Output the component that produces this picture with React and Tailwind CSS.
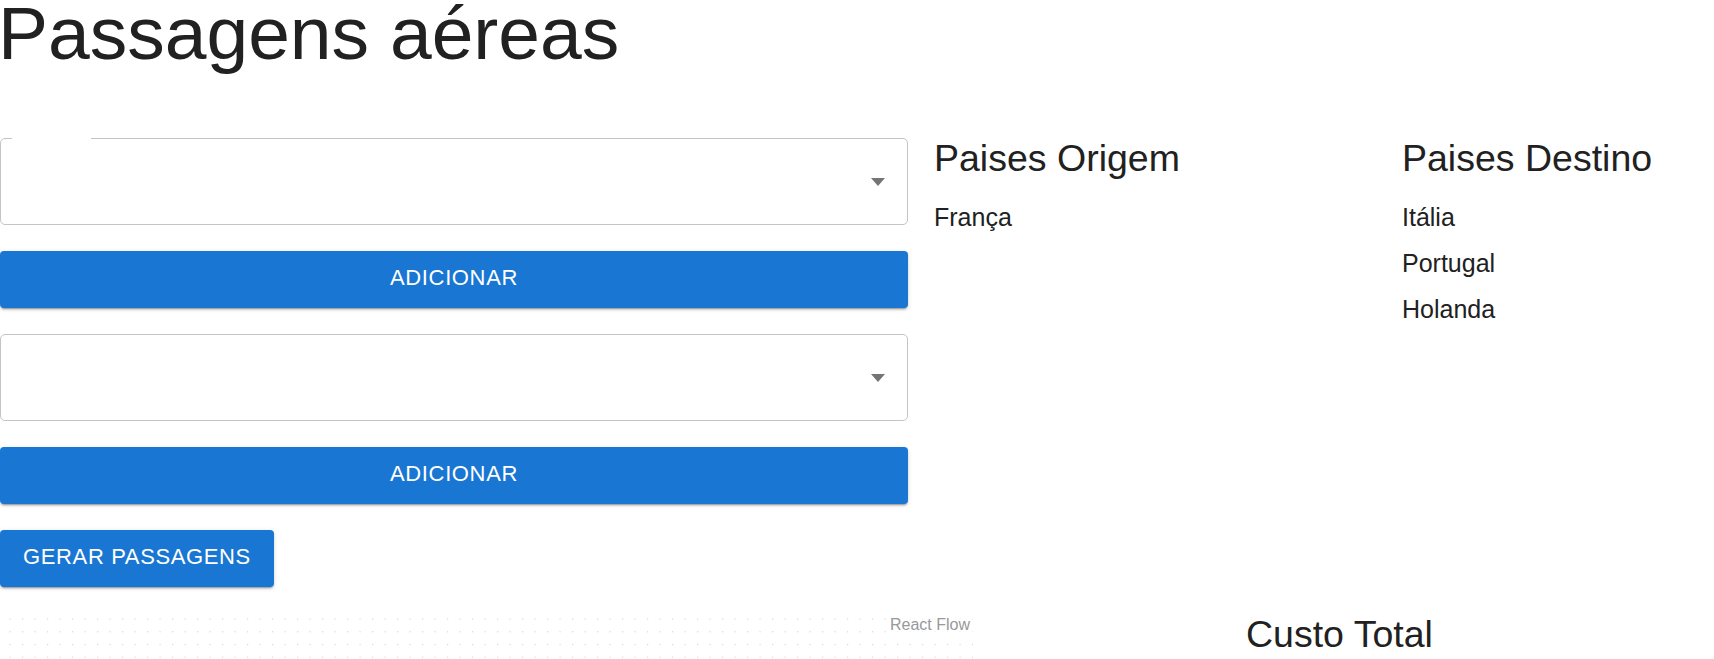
import React from "react";

function SelectBox({ notch }) {
  return (
    <div className="relative h-[87px] w-full rounded-[5px] border border-[#c4c4c4] bg-white">
      {notch && <span className="absolute -top-[1px] left-[11px] h-[2px] w-[79px] bg-white" />}
      <svg className="absolute right-[22px] top-[39px]" width="14" height="8" viewBox="0 0 14 8">
        <path d="M0 0 L14 0 L7 8 Z" fill="#757575" />
      </svg>
    </div>
  );
}

function BlueButton({ children, full }) {
  return (
    <button
      className={`${full ? "w-full" : "w-[274px]"} flex h-[57px] items-center justify-center whitespace-nowrap rounded-[4px] bg-[#1976d2] pb-[4px] text-[22px] uppercase tracking-[0.63px] text-white shadow-[0px_3px_1px_-2px_rgba(0,0,0,0.2),0px_2px_2px_0px_rgba(0,0,0,0.14),0px_1px_5px_0px_rgba(0,0,0,0.12)]`}
    >
      {children}
    </button>
  );
}

export default function App() {
  return (
    <div className="h-[659px] w-[1714px] overflow-hidden bg-white font-['Liberation_Sans',Arial,sans-serif] text-[#212121]">
      <h1 className="-ml-[2px] whitespace-nowrap text-[75px] leading-[67px]">Passagens aéreas</h1>

      <div className="mt-[71px] flex">
        <div className="flex w-[908px] shrink-0 flex-col gap-[26px]">
          <SelectBox notch />
          <BlueButton full>Adicionar</BlueButton>
          <SelectBox />
          <BlueButton full>Adicionar</BlueButton>
          <BlueButton>Gerar Passagens</BlueButton>
        </div>

        <div className="ml-[26px] w-[442px] shrink-0">
          <h4 className="text-[37.5px] leading-[40px]">Paises Origem</h4>
          <ul className="pt-4 text-[25px] leading-[46px]">
            <li>França</li>
          </ul>
        </div>

        <div className="ml-[26px] flex-1">
          <h4 className="whitespace-nowrap text-[37.5px] leading-[40px]">Paises Destino</h4>
          <ul className="pt-4 text-[25px] leading-[46px]">
            <li>Itália</li>
            <li>Portugal</li>
            <li>Holanda</li>
          </ul>
        </div>
      </div>

      <div className="mt-[27px] flex">
        <div className="relative h-[60px] w-[973px] shrink-0">
          <svg className="absolute inset-0 h-full w-full">
            <defs>
              <pattern id="dots" x="9.5" y="4.5" width="12.5" height="12.7" patternUnits="userSpaceOnUse">
                <rect width="1.2" height="1.2" fill="#d6d6d6" />
              </pattern>
            </defs>
            <rect width="100%" height="100%" fill="url(#dots)" />
          </svg>
          <div className="absolute right-0 top-0 bg-white/50 px-[3px] pt-[2px] text-[16px] leading-[18px] text-[#999]">
            React Flow
          </div>
        </div>
        <h4 className="ml-[273px] whitespace-nowrap text-[37.5px] leading-[40px]">Custo Total</h4>
      </div>
    </div>
  );
}
